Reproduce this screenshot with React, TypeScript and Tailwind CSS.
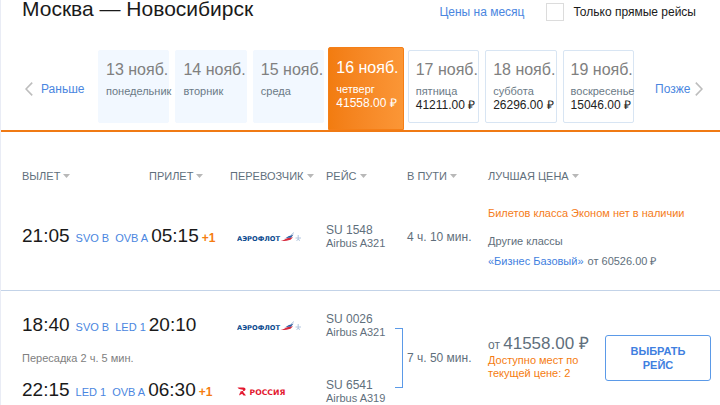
import type { ReactNode } from "react";

type Day = {
  date: string;
  weekday: string;
  price?: string;
  active?: boolean;
};

type Leg = {
  dep: string;
  depCode: string;
  arr: string;
  arrCode: string;
  nextDay?: boolean;
};

const days: Day[] = [
  { date: "13 нояб.", weekday: "понедельник" },
  { date: "14 нояб.", weekday: "вторник" },
  { date: "15 нояб.", weekday: "среда" },
  { date: "16 нояб.", weekday: "четверг", price: "41558.00", active: true },
  { date: "17 нояб.", weekday: "пятница", price: "41211.00" },
  { date: "18 нояб.", weekday: "суббота", price: "26296.00" },
  { date: "19 нояб.", weekday: "воскресенье", price: "15046.00" },
];

function Chevron({ flip }: { flip?: boolean }) {
  return (
    <svg viewBox="0 0 8 14" className={`w-2 h-3.5 shrink-0 ${flip ? "rotate-180" : ""}`} fill="none" stroke="#bdbdbd" strokeWidth="1.6">
      <path d="M7.2 0.6L1 7l6.2 6.4" />
    </svg>
  );
}

function AeroflotLogo() {
  return (
    <svg viewBox="0 0 66 12" className="block w-[66px] h-3" role="img" aria-label="Аэрофлот">
      <text x="0" y="9.6" fontSize="6.7" fontWeight="700" fontFamily="DejaVu Sans, sans-serif" fill="#0b4a8f">АЭРОФЛОТ</text>
      <path d="M43.500 10C46.500 9.600 48 7.800 51 7L56 6.200 53.500 8.800C50.500 9.600 47.500 10.200 43.500 10z" fill="#d8283c" />
      <path d="M47 7.600C49.500 7 50.500 5.400 53 4.800L56.500 3.600 54 6.800C51.500 6.600 49.500 7.200 47 7.600z" fill="#2a5aa0" />
      <path d="M53.500 4.600l3.400-3" stroke="#9db4d3" strokeWidth="0.900" />
      <path d="M58.500 7h5.500M61.200 4v5M59.500 9.500l1.700-1 1.800 1" stroke="#a9bfdb" strokeWidth="0.900" fill="none" />
    </svg>
  );
}

function RossiyaLogo() {
  return (
    <svg viewBox="0 0 66 12" className="block w-[66px] h-3" role="img" aria-label="Россия">
      <path d="M0.500 2.500H6.500c2.400 0 2.800 3 .5 3.600L5.800 6.400 9 10.400H6.500L3.200 6.600c1.700-.4 3-.5 3-1.300 0-.6-.8-.7-1.700-.8C3 4.400 1.600 3.900.5 2.500z" fill="#e3172e" />
      <path d="M3.200 7L5.600 8.600 2 10.400z" fill="#e3172e" />
      <text x="12.500" y="9.600" fontSize="7.700" fontWeight="700" fontFamily="DejaVu Sans, sans-serif" fill="#e3172e">РОССИЯ</text>
    </svg>
  );
}

function DayCard({ day }: { day: Day }) {
  let look = "my-[3px] h-[73px] rounded-[2px] border-[#f2f8ff] bg-[#f2f8ff] text-[#6b7a86]";
  if (day.active) look = "-mx-[2px] h-[83px] rounded-t-[2px] border-[#f57f17] bg-linear-to-r from-[#f27c10] to-[#fb9636] text-white";
  else if (day.price) look = "my-[3px] h-[73px] rounded-[2px] border-[#d8e5f3] bg-white text-[#6b7a86]";
  return (
    <button type="button" className={`flex flex-col items-start border px-[7px] text-left whitespace-nowrap ${day.active ? "pt-[9px]" : "pt-2"} ${look}`}>
      <span className={`text-[16px] leading-[22px] ${day.active ? "" : "text-[#808080]"}`}>{day.date}</span>
      <span className="mt-[3px] text-[11px] leading-[14px]">{day.weekday}</span>
      {day.price && <span className={`text-[12px] leading-[14px] ${day.active ? "" : "text-[#222222]"}`}>{day.price} ₽</span>}
    </button>
  );
}

function Heading({ children, className = "" }: { children: ReactNode; className?: string }) {
  return (
    <th scope="col" className={`pt-9 text-left text-[11px] leading-4 font-normal text-[#5f6f7c] whitespace-nowrap ${className}`}>
      <button type="button" className="flex items-center gap-[3px]">
        {children}
        <svg viewBox="0 0 7 4" className="w-[7px] h-1" fill="#b8b8b8">
          <path d="M0 0h7L3.500 4z" />
        </svg>
      </button>
    </th>
  );
}

function Times({ leg }: { leg: Leg }) {
  return (
    <div className="flex items-baseline whitespace-nowrap text-[11px] leading-6 text-[#4a86e0]">
      <span className="text-[19px] text-[#1a1a1a]">{leg.dep}</span>
      <a href="#" className="ml-[6px]">{leg.depCode}</a>
      <a href="#" className="ml-[6px]">{leg.arrCode}</a>
      <span className="ml-[3px] text-[19px] text-[#1a1a1a]">{leg.arr}</span>
      {leg.nextDay && <b className="ml-[3px] text-[12px] text-[#f57c10]">+1</b>}
    </div>
  );
}

function Flight({ number, plane }: { number: string; plane: string }) {
  return (
    <div className="whitespace-nowrap text-[#5f6f7c]">
      <div className="text-[12px] leading-[14px]">{number}</div>
      <div className="text-[11px] leading-[13px]">{plane}</div>
    </div>
  );
}

export default function App() {
  return (
    <main className="border-l border-[#e9ecf5] bg-white font-['Liberation_Sans',Arial,sans-serif] text-[#5f6f7c]">
      <header className="flex items-start pl-[21px] pr-6">
        <h1 className="flex-1 text-[21px] leading-[18px] text-[#1a1a1a]">Москва — Новосибирск</h1>
        <div className="flex items-center pt-[3px] text-[12px] leading-[18px]">
          <a href="#" className="text-[#4a86e0]">Цены на месяц</a>
          <label className="ml-[22px] flex items-center gap-[9px] text-[#1a1a1a]">
            <input type="checkbox" className="size-[18px] appearance-none border border-[#dcdcdc] bg-white checked:bg-[#4a86e0]" />
            Только прямые рейсы
          </label>
        </div>
      </header>

      {/* Date strip */}
      <nav className="mt-[26px] flex border-b-2 border-[#f07a14]">
        <a href="#" className="flex w-[97px] items-center gap-2 pl-6 text-[12px] text-[#4a86e0]">
          <Chevron />
          Раньше
        </a>
        <div className="grid flex-1 grid-cols-7 items-start gap-[6px]">
          {days.map(day => <DayCard key={day.date} day={day} />)}
        </div>
        <a href="#" className="flex w-[86px] items-center gap-[5px] pl-[21px] text-[12px] text-[#4a86e0]">
          Позже
          <Chevron flip />
        </a>
      </nav>

      {/* Flights */}
      <table className="w-full table-fixed border-collapse">
        <colgroup>
          <col className="w-[148px]" />
          <col className="w-[81px]" />
          <col className="w-[96px]" />
          <col className="w-[69px]" />
          <col className="w-[93px]" />
          <col className="w-[117px]" />
          <col className="w-[115px]" />
        </colgroup>
        <thead>
          <tr>
            <Heading className="pl-[21px]">ВЫЛЕТ</Heading>
            <Heading>ПРИЛЕТ</Heading>
            <Heading>ПЕРЕВОЗЧИК</Heading>
            <Heading>РЕЙС</Heading>
            <Heading className="pl-3">В ПУТИ</Heading>
            <Heading>ЛУЧШАЯ ЦЕНА</Heading>
            <td />
          </tr>
        </thead>
        <tbody className="border-b border-[#c3d3e8]">
          <tr className="h-[106px]">
            <td colSpan={2} className="pl-[21px]">
              <Times leg={{ dep: "21:05", depCode: "SVO B", arr: "05:15", arrCode: "OVB A", nextDay: true }} />
            </td>
            <td className="pl-[7px]"><AeroflotLogo /></td>
            <td><Flight number="SU 1548" plane="Airbus A321" /></td>
            <td className="pl-3 text-[12px] whitespace-nowrap">4 ч. 10 мин.</td>
            <td colSpan={2} className="text-[11px] leading-4 whitespace-nowrap">
              <p className="text-[#f57c20]">Билетов класса Эконом нет в наличии</p>
              <p className="mt-3">Другие классы</p>
              <p className="mt-1">
                <a href="#" className="mr-1 text-[#3f7fe0]">«Бизнес Базовый»</a>
                от 60526.00 ₽
              </p>
            </td>
          </tr>
        </tbody>
        <tbody>
          <tr>
            <td colSpan={2} className="pt-5 pl-[21px]">
              <Times leg={{ dep: "18:40", depCode: "SVO B", arr: "20:10", arrCode: "LED 1" }} />
            </td>
            <td className="pt-5 pl-[7px]"><AeroflotLogo /></td>
            <td className="h-[51px] pt-5"><Flight number="SU 0026" plane="Airbus A321" /></td>
            <td rowSpan={3} className="pt-[18px]">
              <div className="flex items-center gap-1 text-[12px] whitespace-nowrap">
                <span className="h-[60px] w-2 border-y border-r border-[#5b9ae8]" />
                7 ч. 50 мин.
              </div>
            </td>
            <td rowSpan={3} className="pt-[18px] text-[11px] leading-[13px] text-[#f57c10]">
              <p className="text-[12px] leading-[18px] whitespace-nowrap text-[#5f6f7c]">
                от <span className="text-[17px]">41558.00 ₽</span>
              </p>
              Доступно мест по текущей цене: 2
            </td>
            <td rowSpan={3} className="pt-[18px] pr-[9px]">
              <button type="button" className="w-full rounded-[3px] border border-[#5b9ae8] px-4 py-2 text-[11px] leading-[14px] font-bold text-[#3f7fe0]">
                ВЫБРАТЬ РЕЙС
              </button>
            </td>
          </tr>
          <tr>
            <td colSpan={4} className="h-[34px] pl-[21px] text-[11px] text-[#808080]">Пересадка 2 ч. 5 мин.</td>
          </tr>
          <tr>
            <td colSpan={2} className="pl-[21px]">
              <Times leg={{ dep: "22:15", depCode: "LED 1", arr: "06:30", arrCode: "OVB A", nextDay: true }} />
            </td>
            <td className="pl-[7px]"><RossiyaLogo /></td>
            <td className="h-8"><Flight number="SU 6541" plane="Airbus A319" /></td>
          </tr>
        </tbody>
      </table>
    </main>
  );
}
